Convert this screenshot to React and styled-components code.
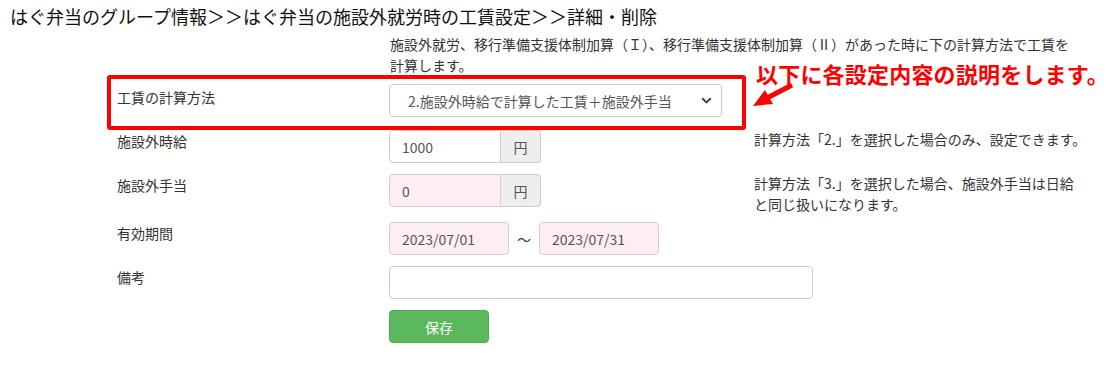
import React from 'react';
import styled, { createGlobalStyle } from 'styled-components';

const GlobalStyle = createGlobalStyle`
    body {
        margin: 0;
        background: #fff;
        color: #333;
        font-family: "Noto Sans CJK JP", "Noto Sans", sans-serif;
    }
`;

const Page = styled.div`
    width: 1108px;
    height: 366px;
    overflow: hidden;
`;

const Title = styled.h1`
    margin: 0;
    padding: 5px 10px 0;
    font-size: 18px;
    line-height: 22px;
    font-weight: 400;
    color: #111;
    white-space: nowrap;
`;

const Form = styled.div`
    padding-left: 117px;
`;

const Description = styled.p`
    margin: 7px 0 8px 273px;
    width: 690px;
    font-size: 14px;
    line-height: 21px;
    color: #333;
`;

const Row = styled.div`
    position: relative;
    display: grid;
    grid-template-columns: 272px 365px 1fr;
    align-items: start;
    margin-bottom: ${props => props.$gap || 11}px;

    ${props => props.$highlight && `
        &::after {
            content: '';
            position: absolute;
            left: -10px;
            top: -9px;
            width: 639px;
            height: 55px;
            box-sizing: border-box;
            border: 4px solid #ff0000;
            border-radius: 3px;
            pointer-events: none;
        }
    `}
`;

const Label = styled.div`
    padding-top: ${props => props.$top || 1}px;
    font-size: 14px;
    line-height: 20px;
    color: #333;
`;

const Field = styled.div`
    display: flex;
    align-items: center;
`;

const Note = styled.div`
    font-size: 14px;
    line-height: 21px;
    color: #333;
    margin-top: -1px;
    margin-bottom: -4px;
`;

const SelectBox = styled.div`
    display: flex;
    align-items: center;
    justify-content: space-between;
    box-sizing: border-box;
    width: 333px;
    height: 33px;
    padding: 0 9px 0 18px;
    border: 1px solid #ccc;
    border-radius: 4px;
    background: #fff;
    font-size: 14px;
    color: #555;
`;

const Input = styled.div`
    box-sizing: border-box;
    width: ${props => props.$width}px;
    height: 33px;
    padding: 0 12px;
    display: flex;
    align-items: center;
    border: 1px solid ${props => (props.$pink ? '#dccdd3' : '#ccc')};
    border-radius: ${props => (props.$joined ? '4px 0 0 4px' : '4px')};
    background: ${props => (props.$pink ? '#fdeef4' : '#fff')};
    font-size: 14px;
    color: #555;
`;

const Addon = styled.div`
    box-sizing: border-box;
    width: 40px;
    height: 33px;
    display: flex;
    align-items: center;
    justify-content: center;
    border: 1px solid #ccc;
    border-left: none;
    border-radius: 0 4px 4px 0;
    background: #eee;
    font-size: 14px;
    color: #555;
`;

const Tilde = styled.span`
    width: 30px;
    text-align: center;
    font-size: 14px;
    color: #333;
`;

const SaveButton = styled.button`
    box-sizing: border-box;
    width: 100px;
    height: 33px;
    border: 1px solid #4cae4c;
    border-radius: 4px;
    background: #5cb85c;
    color: #fff;
    font-family: inherit;
    font-size: 14px;
`;

const Caption = styled.div`
    position: absolute;
    left: 639px;
    top: -22px;
    font-size: 22px;
    line-height: 22px;
    font-weight: 700;
    color: #ff0000;
    white-space: nowrap;
    letter-spacing: 0.2px;
`;

const Arrow = styled.svg`
    position: absolute;
    left: 616px;
    top: -4px;
`;

const Chevron = () => (
    <svg width="11" height="7" viewBox="0 0 11 7">
        <path d="M1.2 1.2 L5.5 5.4 L9.8 1.2" fill="none" stroke="#444" strokeWidth="2" />
    </svg>
);

export default function App() {
    return (
        <Page>
            <GlobalStyle />
            <Title>はぐ弁当のグループ情報＞＞はぐ弁当の施設外就労時の工賃設定＞＞詳細・削除</Title>
            <Form>
                <Description>
                    施設外就労、移行準備支援体制加算（Ｉ）、移行準備支援体制加算（Ⅱ）があった時に下の計算方法で工賃を計算します。
                </Description>

                <Row $highlight $gap={13}>
                    <Label $top={3}>工賃の計算方法</Label>
                    <Field>
                        <SelectBox>
                            <span>2.施設外時給で計算した工賃＋施設外手当</span>
                            <Chevron />
                        </SelectBox>
                    </Field>
                    <div />
                    <Caption>以下に各設定内容の説明をします。</Caption>
                    <Arrow width="62" height="32" viewBox="0 0 62 32">
                        <line x1="59" y1="5" x2="34" y2="18" stroke="#ff0000" strokeWidth="5" />
                        <polygon points="20,26 32,10 40,24" fill="#ff0000" />
                    </Arrow>
                </Row>

                <Row>
                    <Label>施設外時給</Label>
                    <Field>
                        <Input $width={112} $joined>1000</Input>
                        <Addon>円</Addon>
                    </Field>
                    <Note>計算方法「2.」を選択した場合のみ、設定できます。</Note>
                </Row>

                <Row>
                    <Label>施設外手当</Label>
                    <Field>
                        <Input $width={112} $joined $pink>0</Input>
                        <Addon>円</Addon>
                    </Field>
                    <Note>
                        計算方法「3.」を選択した場合、施設外手当は日給
                        <br />
                        と同じ扱いになります。
                    </Note>
                </Row>

                <Row>
                    <Label>有効期間</Label>
                    <Field>
                        <Input $width={120} $pink>2023/07/01</Input>
                        <Tilde>～</Tilde>
                        <Input $width={120} $pink>2023/07/31</Input>
                    </Field>
                    <div />
                </Row>

                <Row style={{ gridTemplateColumns: '272px 1fr' }}>
                    <Label>備考</Label>
                    <Field>
                        <Input $width={424} />
                    </Field>
                </Row>

                <Row>
                    <div />
                    <Field>
                        <SaveButton>保存</SaveButton>
                    </Field>
                    <div />
                </Row>
            </Form>
        </Page>
    );
}
